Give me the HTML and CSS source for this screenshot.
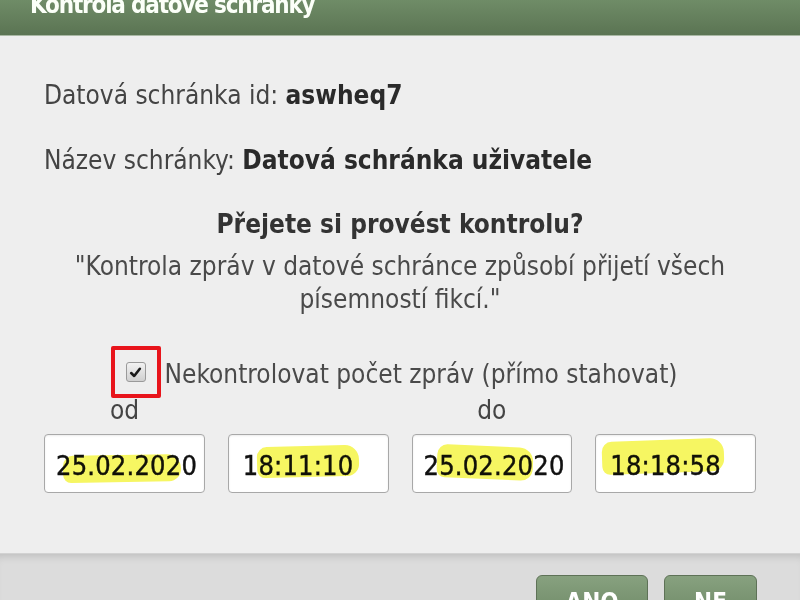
FILE: index.html
```html
<!DOCTYPE html>
<html lang="cs">
<head>
<meta charset="utf-8">
<title>Kontrola datové schránky</title>
<link rel="stylesheet" href="styles.css">
</head>
<body>
<div class="dialog">
  <div class="header"><h1 class="title">Kontrola datové schránky</h1></div>
  <div class="content">
    <p class="info first">Datová schránka id: <b>aswheq7</b></p>
    <p class="info second">Název schránky: <b>Datová schránka uživatele</b></p>
    <p class="question">Přejete si provést kontrolu?</p>
    <p class="quote">"Kontrola zpráv v datové schránce způsobí přijetí všech<br>písemností fikcí."</p>
    <div class="check-row">
      <span class="mark"><span class="checkbox"><svg viewBox="0 0 12 12" width="13" height="13"><path d="M2 6.5 L4.8 9.2 L10 2.6" fill="none" stroke="#1a1a1a" stroke-width="2.4" stroke-linecap="round" stroke-linejoin="round"/></svg></span></span>
      <span class="check-label">Nekontrolovat počet zpráv (přímo stahovat)</span>
    </div>
    <div class="range-labels">
      <span class="lbl-od">od</span>
      <span class="lbl-do">do</span>
    </div>
    <div class="fields">
      <div class="field"><span class="val">25.02.2020</span><span class="hl hl1"></span></div>
      <div class="field time"><span class="val">18:11:10</span><span class="hl hl2"></span></div>
      <div class="field"><span class="val">25.02.2020</span><span class="hl hl3"></span></div>
      <div class="field time"><span class="val">18:18:58</span><span class="hl hl4"></span></div>
    </div>
  </div>
  <div class="footer">
    <button class="btn ano">ANO</button>
    <button class="btn ne">NE</button>
  </div>
</div>
</body>
</html>
```
FILE: styles.css
```css
html, body {
  margin: 0;
  padding: 0;
  height: 100%;
  overflow: hidden;
}
body {
  background: #eeeeee;
  font-family: "DejaVu Sans Condensed", "DejaVu Sans", sans-serif;
  color: #444;
}
.dialog {
  display: flex;
  flex-direction: column;
  height: 600px;
}
.header {
  height: 35px;
  background: linear-gradient(#6f8c67, #5b7453);
  border-bottom: 1px solid #a9b8a4;
  overflow: hidden;
  padding-left: 30px;
  flex: none;
}
.title {
  margin: -9px 0 0 0;
  font-size: 24px;
  line-height: 28px;
  font-weight: bold;
  letter-spacing: -1.2px;
  color: #fbfff8;
}
.content {
  height: 517px;
  padding: 0 44px;
  background: #eeeeee;
  flex: none;
}
.info {
  margin: 0;
  font-size: 26px;
  line-height: 30px;
  color: #444;
}
.info b {
  color: #2a2a2a;
}
.info.first { margin-top: 44px; }
.info.second { margin-top: 35px; }
.question {
  margin: 34px 0 0;
  text-align: center;
  font-size: 26px;
  line-height: 30px;
  font-weight: bold;
  color: #333;
}
.quote {
  margin: 11px 0 0;
  text-align: center;
  font-size: 26px;
  line-height: 33px;
  color: #4a4a4a;
}
.check-row {
  margin-top: 30px;
  display: flex;
  justify-content: center;
  align-items: center;
  gap: 4px;
  padding-right: 12px;
}
.mark {
  width: 42px;
  height: 44px;
  border: 4px solid #e8141b;
  border-radius: 2px;
  display: flex;
  align-items: center;
  justify-content: center;
  flex: none;
}
.checkbox {
  width: 18px;
  height: 18px;
  border: 1px solid #9a9a9a;
  border-radius: 3px;
  background: linear-gradient(#f2f2f2, #d0d0d0);
  display: flex;
  align-items: center;
  justify-content: center;
}
.check-label {
  font-size: 26px;
  line-height: 30px;
  color: #4a4a4a;
  padding-top: 4px;
}
.range-labels {
  display: flex;
  font-size: 26px;
  line-height: 30px;
  color: #444;
  margin-top: -3px;
}
.lbl-od { margin-left: 66px; }
.lbl-do { margin-left: 338px; }
.fields {
  margin-top: 9px;
  display: flex;
  gap: 23px;
}
.field {
  position: relative;
  width: 149px;
  height: 54px;
  border: 1px solid #a8a8a8;
  border-radius: 4px;
  background: #fff;
  overflow: hidden;
  display: flex;
  align-items: center;
  padding-left: 11px;
  padding-top: 3px;
  box-sizing: content-box;
  box-shadow: inset 0 1px 2px rgba(0,0,0,0.08);
}
.field.time { padding-left: 14px; width: 146px; }
.val {
  font-size: 27px;
  color: #111;
  white-space: nowrap;
  letter-spacing: 0.2px;
  -webkit-text-stroke: 0.4px #111;
}
.hl {
  position: absolute;
  background: #f6f662;
  mix-blend-mode: multiply;
  border-radius: 10px 14px 12px 8px;
}
.hl1 { left: 18px; width: 118px; top: 20px; height: 27px; transform: rotate(-1deg); }
.hl2 { left: 28px; width: 102px; top: 11px; height: 31px; transform: rotate(-1.5deg); }
.hl3 { left: 24px; width: 96px; top: 11px; height: 33px; transform: rotate(2.5deg); }
.hl4 { left: 6px; width: 122px; top: 5px; height: 33px; transform: rotate(-2deg); }
.footer {
  flex: 1;
  background: #dcdcdc;
  box-shadow: inset 0 8px 8px -6px rgba(0,0,0,0.15);
  border-top: 1px solid #d2d2d2;
  display: flex;
  justify-content: flex-end;
  align-items: flex-start;
  padding: 21px 43px 0 0;
  gap: 16px;
}
.btn {
  font-family: inherit;
  height: 52px;
  border: 1px solid #5e7257;
  border-radius: 6px;
  background: linear-gradient(#87a17f, #6a8562);
  color: #fff;
  font-weight: bold;
  font-size: 24px;
  padding: 0;
  line-height: 52px;
}
.ano { width: 112px; }
.ne { width: 93px; }
```
